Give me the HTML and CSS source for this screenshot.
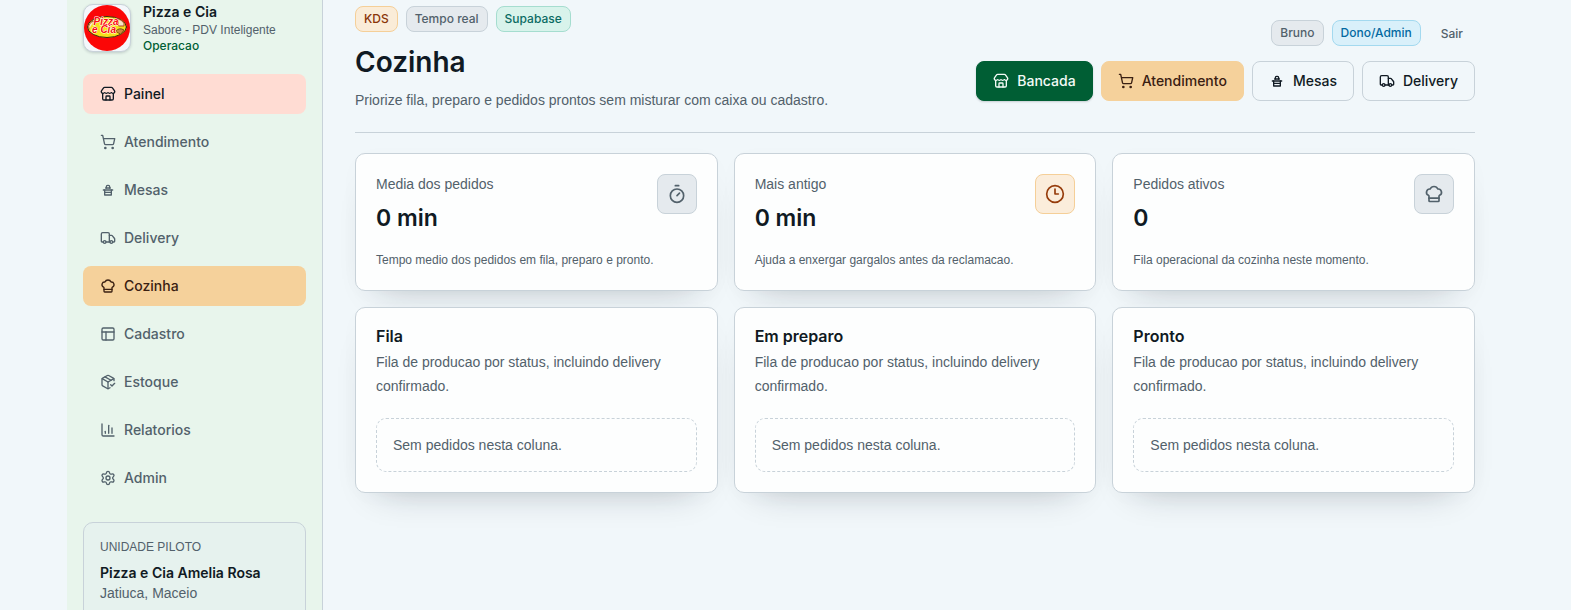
FILE: index.html
```html
<!DOCTYPE html>
<html lang="pt-BR">
<head>
<meta charset="utf-8">
<meta name="viewport" content="width=device-width, initial-scale=1">
<title>Cozinha - Pizza e Cia</title>
<link rel="stylesheet" href="styles.css">
</head>
<body>
<svg class="sprite" aria-hidden="true">
  <symbol id="store" viewBox="0 0 24 24"><path d="M15 21v-5a1 1 0 0 0-1-1h-4a1 1 0 0 0-1 1v5"/><path d="M17.774 10.31a1.12 1.12 0 0 0-1.549 0 2.5 2.5 0 0 1-3.451 0 1.12 1.12 0 0 0-1.548 0 2.5 2.5 0 0 1-3.452 0 1.12 1.12 0 0 0-1.549 0 2.5 2.5 0 0 1-3.77-3.248l2.889-4.184A2 2 0 0 1 7 2h10a2 2 0 0 1 1.653.873l2.895 4.192a2.5 2.5 0 0 1-3.774 3.244"/><path d="M4 10.95V19a2 2 0 0 0 2 2h12a2 2 0 0 0 2-2v-8.05"/></symbol>
  <symbol id="cart" viewBox="0 0 24 24"><circle cx="8" cy="21" r="1"/><circle cx="19" cy="21" r="1"/><path d="M2.05 2.05h2l2.66 12.42a2 2 0 0 0 2 1.58h9.78a2 2 0 0 0 1.95-1.57l1.65-7.43H5.12"/></symbol>
  <symbol id="table" viewBox="0 0 24 24"><path d="M5 12h14"/><path d="M8.500 9h7"/><path d="M9.500 9V7a2 2 0 0 1 2-2h1a2 2 0 0 1 2 2v2"/><path d="M7 12v7.500h10V12"/><path d="M7 15.500h10"/></symbol>
  <symbol id="truck" viewBox="0 0 24 24"><path d="M14 18V6a2 2 0 0 0-2-2H4a2 2 0 0 0-2 2v11a1 1 0 0 0 1 1h2"/><path d="M15 18H9"/><path d="M19 18h2a1 1 0 0 0 1-1v-3.650a1 1 0 0 0-.22-.624l-3.480-4.350A1 1 0 0 0 17.520 8H14"/><circle cx="17" cy="18" r="2"/><circle cx="7" cy="18" r="2"/></symbol>
  <symbol id="chef" viewBox="0 0 24 24"><path d="M17 21a1 1 0 0 0 1-1v-5.350c0-.457.316-.844.727-1.041a4 4 0 0 0-2.134-7.589 5 5 0 0 0-9.186 0 4 4 0 0 0-2.134 7.588c.411.198.727.585.727 1.041V20a1 1 0 0 0 1 1Z"/><path d="M6 17h12"/></symbol>
  <symbol id="panels" viewBox="0 0 24 24"><rect width="18" height="18" x="3" y="3" rx="2"/><path d="M3 9h18"/><path d="M9 21V9"/></symbol>
  <symbol id="package" viewBox="0 0 24 24"><path d="m16 16 2 2 4-4"/><path d="M21 10V8a2 2 0 0 0-1-1.730l-7-4a2 2 0 0 0-2 0l-7 4A2 2 0 0 0 3 8v8a2 2 0 0 0 1 1.730l7 4a2 2 0 0 0 2 0l2-1.140"/><path d="m7.500 4.270 9 5.150"/><path d="M3.290 7 12 12l8.710-5"/><path d="M12 22V12"/></symbol>
  <symbol id="chart" viewBox="0 0 24 24"><path d="M3 3v16a2 2 0 0 0 2 2h16"/><path d="M18 17V9"/><path d="M13 17V5"/><path d="M8 17v-3"/></symbol>
  <symbol id="gear" viewBox="0 0 24 24"><path d="M9.671 4.136a2.340 2.340 0 0 1 4.659 0 2.340 2.340 0 0 0 3.319 1.915 2.340 2.340 0 0 1 2.330 4.033 2.340 2.340 0 0 0 0 3.831 2.340 2.340 0 0 1-2.330 4.033 2.340 2.340 0 0 0-3.319 1.915 2.340 2.340 0 0 1-4.659 0 2.340 2.340 0 0 0-3.320-1.915 2.340 2.340 0 0 1-2.330-4.033 2.340 2.340 0 0 0 0-3.831A2.340 2.340 0 0 1 6.350 6.051a2.340 2.340 0 0 0 3.319-1.915"/><circle cx="12" cy="12" r="3"/></symbol>
  <symbol id="timer" viewBox="0 0 24 24"><path d="M10 2h4"/><path d="m12 14 3-3"/><circle cx="12" cy="14" r="8"/></symbol>
  <symbol id="clock" viewBox="0 0 24 24"><circle cx="12" cy="12" r="10"/><path d="M12 6v6h4"/></symbol>
</svg>
<div class="shell">
  <aside class="sidebar">
    <div class="brand">
      <div class="logo">
        <svg viewBox="0 0 46 46" role="img" aria-label="Pizza e Cia">
          <circle cx="23" cy="23" r="23" fill="#fb0707" stroke="none"/>
          <ellipse cx="23" cy="22" rx="19.500" ry="10.500" fill="#f7e11a" stroke="#3a2a10"/>
          <path d="M5 24q-2-6 5-8M34 14q7 2 6 7h-5z" fill="#f7e6c4" stroke="#b4472a"/>
          <path d="M32 26q3-4 8-1l-3 4z" fill="#c98a3c" stroke="#7a4a16"/>
          <text class="logo-text" x="22" y="20">Pizza</text>
          <text class="logo-text" x="20" y="28">e Cia</text>
        </svg>
      </div>
      <div class="brand-copy">
        <strong class="brand-name">Pizza e Cia</strong>
        <span class="brand-sub">Sabore - PDV Inteligente</span>
        <span class="brand-area">Operacao</span>
      </div>
    </div>
    <nav class="nav">
      <a class="nav-item nav-home" href="#"><svg class="icon"><use href="#store"/></svg>Painel</a>
      <a class="nav-item" href="#"><svg class="icon"><use href="#cart"/></svg>Atendimento</a>
      <a class="nav-item" href="#"><svg class="icon"><use href="#table"/></svg>Mesas</a>
      <a class="nav-item" href="#"><svg class="icon"><use href="#truck"/></svg>Delivery</a>
      <a class="nav-item nav-active" href="#" aria-current="page"><svg class="icon"><use href="#chef"/></svg>Cozinha</a>
      <a class="nav-item" href="#"><svg class="icon"><use href="#panels"/></svg>Cadastro</a>
      <a class="nav-item" href="#"><svg class="icon"><use href="#package"/></svg>Estoque</a>
      <a class="nav-item" href="#"><svg class="icon"><use href="#chart"/></svg>Relatorios</a>
      <a class="nav-item" href="#"><svg class="icon"><use href="#gear"/></svg>Admin</a>
    </nav>
    <section class="unit">
      <p class="unit-label">UNIDADE PILOTO</p>
      <p class="unit-name">Pizza e Cia Amelia Rosa</p>
      <p class="unit-place">Jatiuca, Maceio</p>
    </section>
  </aside>
  <main class="main">
    <header class="header">
      <div class="heading">
        <div class="badges">
          <span class="badge badge-amber">KDS</span>
          <span class="badge badge-gray">Tempo real</span>
          <span class="badge badge-teal">Supabase</span>
        </div>
        <h1 class="title">Cozinha</h1>
        <p class="subtitle">Priorize fila, preparo e pedidos prontos sem misturar com caixa ou cadastro.</p>
      </div>
      <div class="controls">
        <div class="badges">
          <span class="badge badge-gray">Bruno</span>
          <span class="badge badge-blue">Dono/Admin</span>
          <button class="logout" type="button">Sair</button>
        </div>
        <div class="actions">
          <a class="button button-green" href="#"><svg class="icon"><use href="#store"/></svg>Bancada</a>
          <a class="button button-amber" href="#"><svg class="icon"><use href="#cart"/></svg>Atendimento</a>
          <a class="button" href="#"><svg class="icon"><use href="#table"/></svg>Mesas</a>
          <a class="button" href="#"><svg class="icon"><use href="#truck"/></svg>Delivery</a>
        </div>
      </div>
    </header>
    <section class="grid">
      <article class="card stat">
        <div class="stat-top">
          <div><p class="stat-label">Media dos pedidos</p><p class="stat-value">0 min</p></div>
          <span class="stat-icon"><svg><use href="#timer"/></svg></span>
        </div>
        <p class="stat-note">Tempo medio dos pedidos em fila, preparo e pronto.</p>
      </article>
      <article class="card stat">
        <div class="stat-top">
          <div><p class="stat-label">Mais antigo</p><p class="stat-value">0 min</p></div>
          <span class="stat-icon stat-icon-amber"><svg><use href="#clock"/></svg></span>
        </div>
        <p class="stat-note">Ajuda a enxergar gargalos antes da reclamacao.</p>
      </article>
      <article class="card stat">
        <div class="stat-top">
          <div><p class="stat-label">Pedidos ativos</p><p class="stat-value">0</p></div>
          <span class="stat-icon"><svg><use href="#chef"/></svg></span>
        </div>
        <p class="stat-note">Fila operacional da cozinha neste momento.</p>
      </article>
      <article class="card">
        <h2 class="column-title">Fila</h2>
        <p class="column-note">Fila de producao por status, incluindo delivery confirmado.</p>
        <p class="empty">Sem pedidos nesta coluna.</p>
      </article>
      <article class="card">
        <h2 class="column-title">Em preparo</h2>
        <p class="column-note">Fila de producao por status, incluindo delivery confirmado.</p>
        <p class="empty">Sem pedidos nesta coluna.</p>
      </article>
      <article class="card">
        <h2 class="column-title">Pronto</h2>
        <p class="column-note">Fila de producao por status, incluindo delivery confirmado.</p>
        <p class="empty">Sem pedidos nesta coluna.</p>
      </article>
    </section>
  </main>
</div>
</body>
</html>
```
FILE: styles.css
```css
:root {
  --ink: #101a23;
  --muted: #52616b;
  --line: #c8d2d9;
  --amber: #f5d19b;
  --text: "Liberation Sans", Arial, sans-serif;
  --strong: Inter, "Liberation Sans", sans-serif;
}
* { box-sizing: border-box; }
body {
  margin: 0;
  height: 100vh;
  padding-left: 3px;
  overflow: hidden;
  background: #f1f7fa;
  color: var(--ink);
  font: 14px/20px var(--text);
}
p, h1, h2 { margin: 0; }
a { color: inherit; text-decoration: none; }
svg { fill: none; stroke: currentColor; stroke-width: 2; stroke-linecap: round; stroke-linejoin: round; }
.sprite { display: none; }
.icon { width: 16px; height: 16px; flex: none; }
.shell {
  display: grid;
  grid-template-columns: 256px minmax(0, 1fr);
  max-width: 1440px;
  height: 100vh;
  margin: 0 auto;
}
.sidebar {
  padding: 2px 16px 0;
  overflow: hidden;
  background: #e8f5ec;
  border-right: 1px solid var(--line);
}
.brand { display: flex; align-items: center; gap: 12px; margin-bottom: 20px; }
.logo {
  width: 48px;
  height: 48px;
  flex: none;
  overflow: hidden;
  background: #f4f7fb;
  border: 1px solid var(--line);
  border-radius: 10px;
  box-shadow: 0 1px 3px #10182830;
}
.logo svg { display: block; width: 100%; height: 100%; stroke-width: 1; }
.logo-text {
  fill: #fb1010;
  stroke: #fff;
  stroke-width: 1;
  paint-order: stroke;
  font: italic 900 10px "Liberation Sans", sans-serif;
  text-anchor: middle;
}
.brand-copy { display: flex; flex-direction: column; white-space: nowrap; font-size: 12px; line-height: 16px; }
.brand-name { font-family: var(--strong); font-size: 14px; font-weight: 600; line-height: 20px; }
.brand-sub { color: var(--muted); }
.brand-area { color: #005e34; font-family: var(--strong); font-weight: 500; }
.nav { display: grid; gap: 8px; }
.nav-item, .button {
  display: flex;
  align-items: center;
  gap: 8px;
  height: 40px;
  padding: 0 16px;
  border: 1px solid transparent;
  border-radius: 8px;
  font-family: var(--strong);
  font-weight: 500;
}
.nav-item { color: var(--muted); }
.nav-home { background: #ffdcd3; color: var(--ink); }
.nav-active { background: var(--amber); color: #3a2012; }
.unit {
  margin-top: 24px;
  padding: 16px;
  background: #e6f2ee;
  border: 1px solid var(--line);
  border-radius: 10px;
}
.unit-label { color: var(--muted); font-size: 12px; line-height: 16px; }
.unit-name { margin-top: 8px; font-family: var(--strong); font-weight: 600; }
.unit-place { color: var(--muted); }
.main { padding: 6px 32px 32px; }
.header {
  display: flex;
  align-items: center;
  justify-content: space-between;
  gap: 24px;
  padding-bottom: 20px;
  margin-bottom: 20px;
  border-bottom: 1px solid var(--line);
}
.badges { display: flex; align-items: center; gap: 8px; }
.badge {
  padding: 4px 8px;
  border: 1px solid var(--line);
  border-radius: 8px;
  font-family: var(--strong);
  font-size: 12px;
  font-weight: 500;
  line-height: 16px;
}
.badge-amber { background: #faecd8; border-color: #f5cf98; color: #8a3508; }
.badge-gray { background: #e5eaee; color: var(--muted); }
.badge-teal { background: #d8f3eb; border-color: #a5ddcf; color: #0b6b63; }
.badge-blue { background: #d9f0fa; border-color: #a3d9ef; color: #0369a1; }
.title { margin: 12px 0 8px; font-family: var(--strong); font-size: 28px; font-weight: 600; line-height: 36px; }
.subtitle { color: var(--muted); line-height: 24px; }
.controls { display: flex; flex-direction: column; align-items: flex-end; gap: 12px; }
.logout {
  height: 32px;
  padding: 0 12px;
  border: 0;
  border-radius: 8px;
  background: none;
  color: var(--muted);
  font-family: var(--strong);
  font-size: 12px;
  font-weight: 500;
}
.actions { display: flex; gap: 8px; }
.button { border-color: var(--line); }
.button-green { background: #005e34; border-color: #005e34; color: #f4fbf7; box-shadow: 0 1px 2px #10182830; }
.button-amber { background: var(--amber); border-color: var(--amber); color: #3a2012; }
.grid { display: grid; grid-template-columns: repeat(3, minmax(0, 1fr)); gap: 16px; }
.card {
  padding: 20px;
  background: #fdfefe;
  border: 1px solid var(--line);
  border-radius: 10px;
  box-shadow: 0 18px 36px -24px #10182850, 0 4px 28px #10182804;
}
.stat-top { display: flex; justify-content: space-between; margin-bottom: 16px; }
.stat-label { color: var(--muted); }
.stat-value { margin-top: 8px; font-family: var(--strong); font-size: 23px; font-weight: 600; line-height: 32px; }
.stat-icon {
  display: grid;
  place-items: center;
  width: 40px;
  height: 40px;
  background: #e5eaee;
  border: 1px solid var(--line);
  border-radius: 8px;
  color: var(--muted);
}
.stat-icon svg { width: 20px; height: 20px; }
.stat-icon-amber { background: #fbeddb; border-color: #f5cf98; color: #963c0b; }
.stat-note { color: var(--muted); font-size: 12px; }
.column-title { font-family: var(--strong); font-size: 16px; font-weight: 600; line-height: 16px; }
.column-note { margin: 6px 0 20px; color: var(--muted); line-height: 24px; }
.empty {
  padding: 16px;
  border: 1px dashed var(--line);
  border-radius: 10px;
  color: var(--muted);
}
```
